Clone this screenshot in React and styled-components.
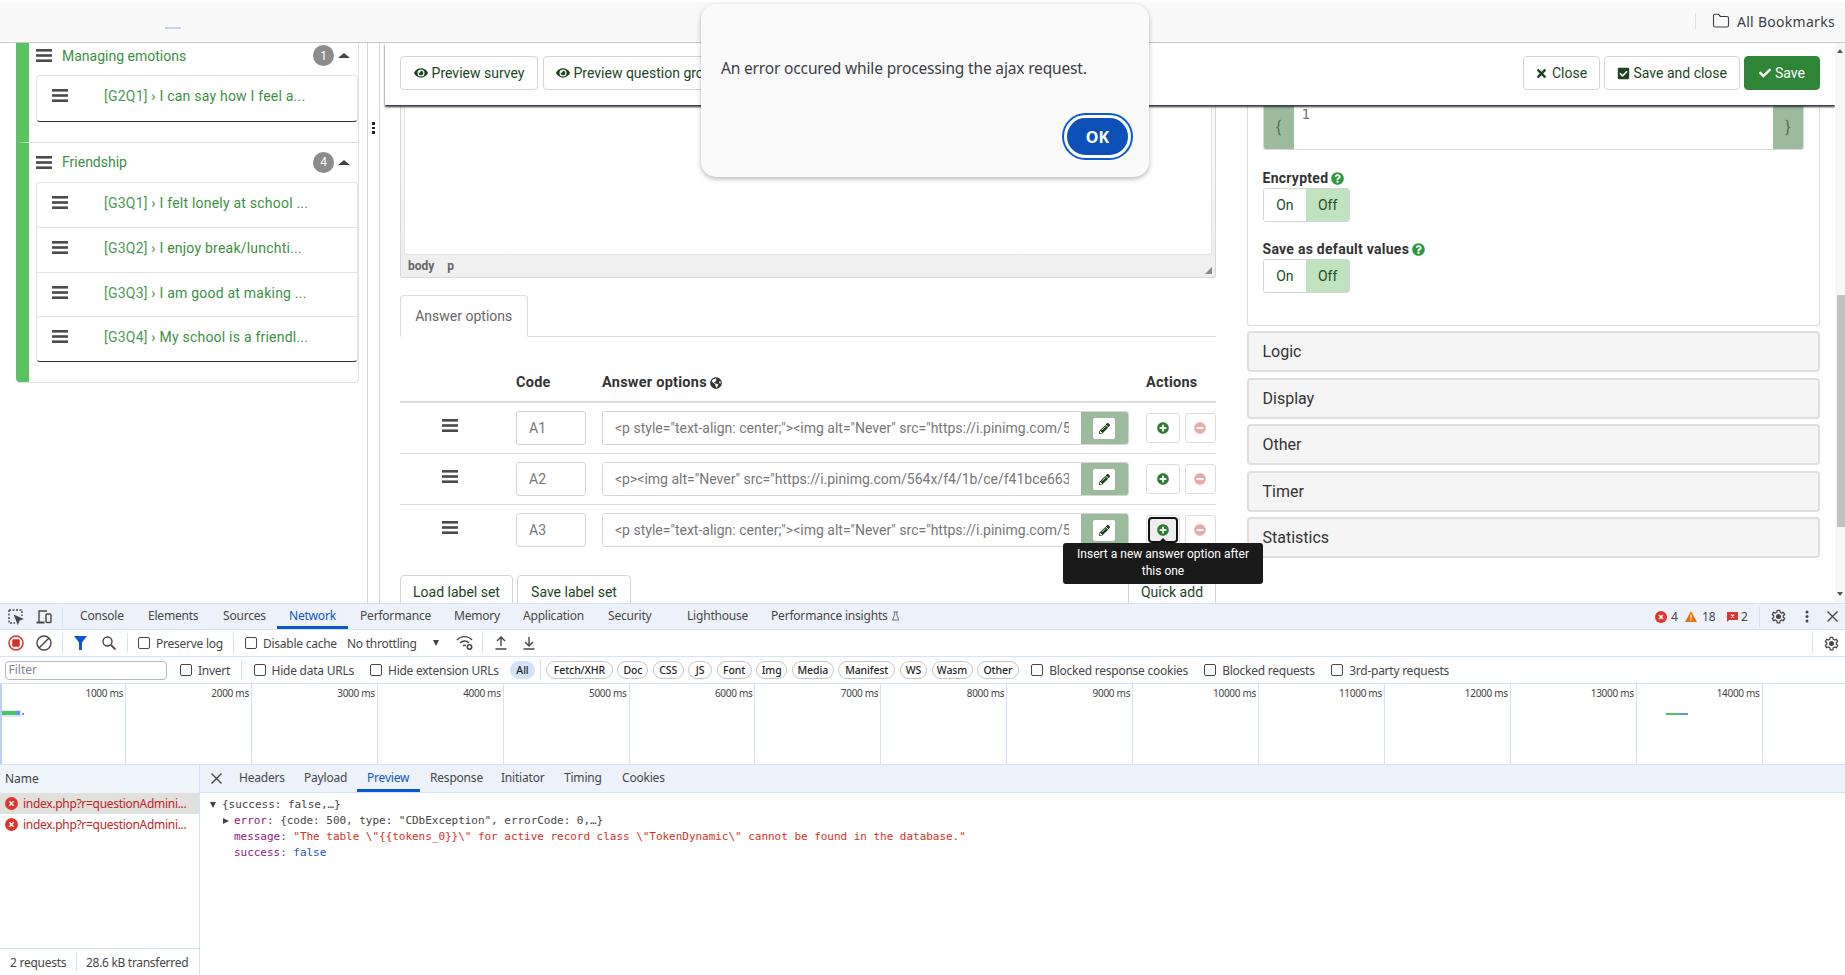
import React from 'react';
import styled, { createGlobalStyle } from 'styled-components';
import { FaEye, FaTimes, FaCheckSquare, FaCheck, FaPlusCircle, FaMinusCircle, FaPencilAlt, FaQuestionCircle, FaGlobeAmericas } from 'react-icons/fa';
import { Folder } from 'lucide-react';

const Global = createGlobalStyle`
  html, body { margin: 0; padding: 0; overflow: hidden; background: #fff; }
  * { box-sizing: border-box; }
  #root { width: 1845px; height: 975px; }
`;

const Page = styled.div`
  width: 1845px; height: 975px; display: flex; flex-direction: column; position: relative; overflow: hidden;
  font-family: Roboto, "Liberation Sans", sans-serif; font-size: 14px; color: #333;
`;

/* top bar */
const BookmarkBar = styled.div`
  height: 43px; flex: none; background: #f9f9f9; border-bottom: 1px solid #c9c9c9; border-top: 2px solid #fff;
  display: flex; align-items: center; padding: 0 9px 2px 0; position: relative;
  font-family: "Noto Sans", sans-serif; font-size: 14px; color: #3c4043;
`;
const BlueMark = styled.div`
  width: 16px; height: 2px; background: #c3d5f3; margin: 14px 0 0 165px;
`;
const BarSep = styled.div`
  width: 1px; height: 16px; background: #dedede; margin: 0 16px 0 auto;
`;
const BookmarkLabel = styled.span`
  margin-left: 7px; width: 99px; white-space: nowrap; letter-spacing: 0.28px;
`;

const Main = styled.div`
  flex: none; height: 560px; display: flex; overflow: hidden;
`;

/* sidebar */
const Sidebar = styled.div`
  width: 368px; flex: none; border-right: 1px solid #d5d5d5; padding-left: 16px; overflow: hidden;
`;
const TreePanel = styled.div`
  width: 343px; margin-top: -7px; border: 1px solid #e2e2e2; border-left: 0; border-top: 0; border-radius: 0 0 4px 4px;
`;
const Group = styled.div`
  border-left: 13px solid #5bc162; padding: 0 0 20px 7px;
  & + & { border-top: 1px solid #e0e0e0; }
  &:last-child { border-radius: 0 0 0 4px; }
`;
const GroupHead = styled.div`
  height: 39px; display: flex; align-items: center; padding-right: 8px; position: relative;
`;
const GroupName = styled.span`
  margin-left: 10px; color: #3b9143; font-size: 14px; flex: 1;
`;
const Badge = styled.span`
  width: 21px; height: 21px; border-radius: 50%; background: #8c8c8c; color: #fff; font-size: 12px;
  display: flex; align-items: center; justify-content: center;
`;
const CaretUp = styled.span`
  width: 0; height: 0; margin-left: 4px; border: 6px solid transparent; border-top: 0; border-bottom: 5px solid #444;
`;
const ItemList = styled.div`
  width: 322px; border: 1px solid #e4e4e4; border-bottom: 1px solid #333; border-radius: 4px; background: #fff;
`;
const Item = styled.div`
  height: 44.5px; padding: 12px 0 0 15px; display: flex; align-items: flex-start;
  & + & { border-top: 1px solid #e4e4e4; }
  svg { margin-top: 1px; }
`;
const ItemText = styled.span`
  margin-left: 36px; color: #3b9143; font-size: 14px; line-height: 16px; white-space: nowrap; letter-spacing: 0.22px;
`;
const Code = styled.span`
  color: #4e9a55;
`;

const BarsSvg = styled.svg`
  flex: none; display: block; width: 16px; height: 13px; fill: ${p => p.$color || '#4a4a4a'};
`;
const Bars = ({ color }) => (
  <BarsSvg viewBox="0 0 16 13" $color={color}>
    <rect y="0" width="16" height="2.6" /><rect y="5.2" width="16" height="2.6" /><rect y="10.4" width="16" height="2.6" />
  </BarsSvg>
);

const Resizer = styled.div`
  width: 12px; flex: none; border-right: 1px solid #d5d5d5; display: flex; flex-direction: column; align-items: center; padding: 79px 0 0 0; gap: 2px;
`;
const Dot = styled.span`
  width: 3px; height: 2.5px; background: #223; margin-left: 0;
`;

/* content */
const Content = styled.div`
  flex: 1; min-width: 0; display: flex; flex-direction: column; overflow: hidden;
`;
const Toolbar = styled.div`
  margin-left: 5px; height: 62px; flex: none; padding: 13px 15px 0 15px; display: flex; gap: 4.5px; background: #fff;
  box-shadow: 0 2px 2px #2e3440; position: relative; z-index: 2;
`;
const Btn = styled.div`
  height: 34px; width: ${p => p.$w}px; flex: none; display: flex; align-items: center; justify-content: center; gap: 4px;
  border: 1px solid ${p => (p.$primary ? '#2f8438' : '#d5d5d5')}; border-radius: 4px; white-space: nowrap; overflow: hidden;
  background: ${p => (p.$primary ? '#2f8438' : '#fff')}; color: ${p => (p.$primary ? '#fff' : '#1d441f')}; font-size: 14px;
  ${p => p.$push && 'margin-left: auto;'}
  ${p => p.$left && 'justify-content: flex-start; padding-left: 12px;'}
  ${p => p.$shift && `margin-left: ${p.$shift}px;`}
`;
const Columns = styled.div`
  flex: 1; min-height: 0; display: flex; padding: 0 15px 0 20px; gap: 30.5px; overflow: hidden;
`;
const LeftCol = styled.div`
  width: 816px; flex: none;
`;
const RightCol = styled.div`
  width: 573.5px; flex: none;
`;

const Editor = styled.div`
  height: 173px; border: 1px solid #d8d8d8; border-top: 0; border-radius: 0 0 3px 3px; padding: 0 3px 0 3px; position: relative;
  background: linear-gradient(#fafafa, #efefef);
`;
const EditorFrame = styled.div`
  height: 150px; background: #fff; border: 1px solid #e3e3e3; border-top: 0; margin-bottom: 0;
`;
const EditorPath = styled.div`
  height: 22px; display: flex; gap: 13px; align-items: center; padding-left: 4px; font-size: 12px; font-weight: 700; color: #666;
`;
const ResizeGrip = styled.span`
  position: absolute; right: 3px; bottom: 3px; width: 0; height: 0; border-left: 7px solid transparent; border-bottom: 7px solid #888;
`;

const TabStrip = styled.div`
  margin-top: 17px; height: 42px; border-bottom: 1px solid #dcdcdc; display: flex;
`;
const Tab = styled.div`
  width: 127.5px; height: 42px; border: 1px solid #dcdcdc; border-bottom: 1px solid #fff; border-radius: 4px 4px 0 0;
  color: #666; display: flex; align-items: center; justify-content: center; background: #fff;
`;

const TableGrid = styled.div`
  display: grid; grid-template-columns: 116px 86px 544px 70px;
`;
const HeadRow = styled(TableGrid)`
  height: 66px; border-bottom: 2px solid #dcdcdc; align-items: end; padding-bottom: 10px; font-weight: 700; font-size: 14px; color: #333; line-height: 16px; letter-spacing: 0.25px;
`;
const HeadCell = styled.div`
  display: flex; align-items: center; gap: 3px; white-space: nowrap; font-size: 14.5px;
`;
const Row = styled(TableGrid)`
  height: ${p => (p.$last ? 70 : 51)}px; padding-top: 8px;
  ${p => !p.$last && 'border-bottom: 1px solid #dcdcdc;'}
`;
const DragCell = styled.div`
  display: flex; justify-content: center; padding: 8px 16px 0 0;
`;
const CodeInput = styled.input`
  width: 70px; height: 34px; border: 1px solid #d5d5d5; border-radius: 3px; padding: 0 12px; font: 14px Roboto, sans-serif; color: #777; outline: none; background: #fff;
`;
const InputGroup = styled.div`
  width: 527px; height: 34px; display: flex; border: 1px solid #d5d5d5; border-radius: 3px; overflow: hidden;
`;
const AnswerInput = styled.input`
  flex: 1; min-width: 0; border: 0; padding: 0 12px; font: 14px Roboto, sans-serif; color: #777; outline: none; background: #fff;
`;
const EditAddon = styled.div`
  width: 47.5px; flex: none; background: #9cba9c; display: flex; align-items: center; justify-content: center;
`;
const EditBtn = styled.div`
  width: 22px; height: 21px; background: #fff; border-radius: 2px; display: flex; align-items: center; justify-content: center; color: #1c3d1c; font-size: 11px; padding-left: 1px;
`;
const ActionCell = styled.div`
  display: flex; gap: 4.5px; padding-top: 2px; height: 32px;
`;
const ActionBtn = styled.div`
  width: ${p => p.$w}px; height: 30px; border: 1px solid #ddd; border-radius: 3px; display: flex; align-items: center; justify-content: center;
  color: ${p => p.$color}; font-size: 12px; position: relative; flex: none; background: #fff;
`;
const FocusRing = styled.div`
  width: 30px; height: 26px; border: 2px solid #111; border-radius: 4px; background: #eee; display: flex; align-items: center; justify-content: center;
`;
const Tooltip = styled.div`
  position: absolute; left: -84px; top: 27px; width: 200px; height: 41px; background: #1a1a1a; color: #fff; border-radius: 3px;
  font-size: 12px; line-height: 17px; text-align: center; padding: 3px 8px; z-index: 3;
  &::before { content: ""; position: absolute; left: 95px; top: -5px; border: 5px solid transparent; border-top: 0; border-bottom: 5px solid #1a1a1a; }
`;
const BottomBtns = styled.div`
  display: flex; gap: 4px; grid-column: 1 / 4;
`;

/* right column */
const SettingsPanel = styled.div`
  height: 221px; border: 1px solid #ddd; border-top: 0; border-radius: 0 0 3px 3px; padding: 0 15px;
`;
const EqGroup = styled.div`
  height: 45px; display: flex; border: 1px solid #d8d8d8; border-top: 0; border-radius: 0 0 3px 3px; overflow: hidden; position: relative;
`;
const EqAddon = styled.div`
  width: 30px; flex: none; background: #9cba9c; color: #5d6b5d; display: flex; align-items: center; justify-content: center; font-size: 16px;
`;
const EqArea = styled.div`
  flex: 1; background: #fff; font: 14px "DejaVu Sans Mono", monospace; color: #777; padding: 0 0 0 8px; line-height: 18px; position: relative;
`;
const Label = styled.div`
  margin-top: ${p => p.$mt}px; height: 20px; display: flex; align-items: center; gap: 3px; font-weight: 700; color: #333; font-size: 14px; letter-spacing: 0.27px;
`;
const Switch = styled.div`
  width: 87.5px; height: 34px; display: flex; border: 1px solid #d5d5d5; border-radius: 3px; overflow: hidden;
`;
const SwitchPart = styled.div`
  flex: 1; display: flex; align-items: center; justify-content: center; color: #244d24;
  background: ${p => (p.$on ? '#bfe2bf' : '#fff')};
`;
const Accordion = styled.div`
  margin-top: ${p => p.$mt}px; height: 41px; border: 2px solid #dedede; border-radius: 4px; background: #f5f5f5; display: flex; align-items: center; padding-left: 14px; font-size: 16px; color: #333;
`;
const Scrollbar = styled.div`
  width: 10px; flex: none; background: #f7f7f7; display: flex; flex-direction: column; align-items: center; position: relative;
`;
const ScrollUp = styled.span`
  width: 0; height: 0; margin-top: 6px; border: 3.5px solid transparent; border-top: 0; border-bottom: 4px solid #555;
`;
const ScrollThumb = styled.div`
  width: 8px; height: 232px; margin: 242px 0 0 2px; background: #c1c1c1;
`;
const ScrollDown = styled.span`
  width: 0; height: 0; margin-top: 65px; border: 3.5px solid transparent; border-bottom: 0; border-top: 4px solid #555;
`;

/* dialog */
const Dialog = styled.div`
  position: absolute; left: 701px; top: 4px; width: 448px; height: 173px; background: #fafafa; border-radius: 15px;
  box-shadow: 0 2px 5px rgba(0,0,0,.28); display: flex; flex-direction: column; z-index: 5;
  font-family: "Noto Sans", sans-serif; color: #3a3f47;
`;
const DialogMsg = styled.div`
  margin: 52px 0 0 20px; font-size: 15.5px; line-height: 24px; white-space: nowrap; letter-spacing: -0.16px;
`;
const DialogFoot = styled.div`
  margin-top: auto; display: flex; justify-content: flex-end; padding: 0 18px 19px 0;
`;
const OkBtn = styled.div`
  width: 67px; height: 43px; border-radius: 22px; background: #0d50b8; border: 3px solid #fff; box-shadow: 0 0 0 2px #0d5bd0; color: #fff;
  font-weight: 700; font-size: 16px; display: flex; align-items: center; justify-content: center;
`;

/* devtools */
const DevTools = styled.div`
  flex: 1; min-height: 0; display: flex; flex-direction: column; font-family: "Noto Sans", sans-serif; font-size: 12px; color: #474747; background: #fff;
`;
const DTabs = styled.div`
  height: 27px; flex: none; background: #edf2fa; border-top: 1px solid #d3e3fd; border-bottom: 1px solid #d3e3fd; display: flex; align-items: stretch;
`;
const IconSlot = styled.div`
  width: ${p => p.$w}px; flex: none; display: flex; align-items: center; justify-content: ${p => p.$align || 'flex-start'}; padding-left: ${p => p.$pl || 0}px; gap: ${p => p.$gap || 0}px;
`;
const DTab = styled.div`
  width: ${p => p.$w}px; flex: none; padding: 0 0 2px 12px; white-space: nowrap; display: flex; align-items: center; gap: 4px; position: relative;
  letter-spacing: -0.2px;
  color: ${p => (p.$on ? '#0b57d0' : '#474747')};
  ${p => p.$on && 'box-shadow: inset 0 -3px 0 #0b57d0;'}
`;
const VSep = styled.div`
  width: 1px; height: ${p => p.$h || 20}px; flex: none; background: #d3e3fd; align-self: center; margin: ${p => p.$m || 0};
`;
const Counts = styled.div`
  margin-left: auto; display: flex; align-items: center; font-size: 12px;
`;
const CountText = styled.span`
  width: ${p => p.$w}px; padding-left: ${p => p.$pl}px;
`;
const DRow = styled.div`
  height: 27px; flex: none; border-bottom: 1px solid #d3e3fd; display: flex; align-items: center; white-space: nowrap;
`;
const CheckLabel = styled.label`
  width: ${p => p.$w}px; flex: none; display: flex; align-items: center; gap: 6px; letter-spacing: -0.25px;
`;
const Check = styled.span`
  width: 12px; height: 12px; flex: none; border: 1px solid #474747; border-radius: 2px; background: #fff;
`;
const PlainText = styled.span`
  width: ${p => p.$w}px; flex: none; letter-spacing: -0.25px;
`;
const FilterBox = styled.div`
  width: 162px; height: 19px; margin: 0 13.5px 0 4.5px; flex: none; border: 1px solid #b8b8b8; border-radius: 4px; color: #80868b; padding-left: 3px; line-height: 16px; font-size: 12px;
`;
const Pills = styled.div`
  display: flex; gap: 4.4px; margin-right: 12.3px;
`;
const Pill = styled.div`
  width: ${p => p.$w}px; height: 18px; border-radius: 9px; border: 1px solid ${p => (p.$on ? '#d3e3fd' : '#c7c7c7')}; background: ${p => (p.$on ? '#d3e3fd' : '#fff')};
  font-size: 10.5px; font-weight: 500; color: #1f1f1f; display: flex; align-items: center; justify-content: center; flex: none; letter-spacing: -0.1px;
`;
const Overview = styled.div`
  height: 81px; flex: none; display: flex; position: relative; border-bottom: 1px solid #d3e3fd; border-left: 2px solid #b9d0f5; margin-left: 0;
`;
const Tick = styled.div`
  width: ${p => p.$w}px; flex: none; border-right: 1px solid #d3e3fd; text-align: right; padding: 3px 2px 0 0; font-size: 10px; line-height: 13px; color: #444; letter-spacing: -0.3px;
`;
const OverviewBars = styled.svg`
  position: absolute; left: 0; top: 0; width: 1845px; height: 81px; pointer-events: none;
`;
const Details = styled.div`
  flex: 1; min-height: 0; display: flex;
`;
const NameCol = styled.div`
  width: 200px; flex: none; border-right: 1px solid #d3e3fd; display: flex; flex-direction: column;
`;
const NameHead = styled.div`
  height: 28px; flex: none; background: #f0f4fb; display: flex; align-items: center; padding: 0 0 2px 5px; color: #3c4043;
`;
const ReqRow = styled.div`
  height: 21px; flex: none; display: flex; align-items: center; padding: 0 0 1px 5px; gap: 5px; background: ${p => (p.$on ? '#e0e0dd' : '#fff')}; color: #c5221f; white-space: nowrap; overflow: hidden; letter-spacing: -0.3px;
`;
const StatusBar = styled.div`
  margin-top: auto; height: 27px; flex: none; border-top: 1px solid #d3e3fd; display: flex; align-items: center; padding-left: 10px; white-space: nowrap; letter-spacing: -0.3px;
`;
const PreviewCol = styled.div`
  flex: 1; min-width: 0; display: flex; flex-direction: column;
`;
const PTabs = styled.div`
  height: 28px; flex: none; background: #edf2fa; border-bottom: 1px solid #d3e3fd; display: flex; padding-left: 11px; align-items: stretch;
`;
const PTab = styled(DTab)`
  box-shadow: ${p => (p.$on ? 'inset 0 -3px 0 #0b57d0' : 'none')};
  padding-left: 10px;
`;
const Json = styled.div`
  padding: 4px 0 0 10px; font: 11px/16px "DejaVu Sans Mono", monospace; color: #444; white-space: pre; letter-spacing: -0.03px;
`;
const JsonLine = styled.div`
  height: 16px; padding-left: ${p => p.$indent}px; display: flex; align-items: center;
`;
const Tri = styled.span`
  width: 0; height: 0; margin-right: ${p => p.$mr}px;
  ${p => (p.$down
    ? 'border-left: 3.5px solid transparent; border-right: 3.5px solid transparent; border-top: 6px solid #444;'
    : 'border-top: 3.5px solid transparent; border-bottom: 3.5px solid transparent; border-left: 6px solid #444;')}
`;
const Key = styled.span`color: #8b1a7f;`;
const Str = styled.span`color: #d93025;`;
const Bool = styled.span`color: #1a56c4;`;

const ic = { fill: 'none', stroke: '#474747', strokeWidth: 1.4 };

const InspectIcon = () => (
  <svg width="16" height="16" viewBox="0 0 16 16" {...ic} strokeDasharray="2 1.5">
    <path d="M1 1h13v6M1 1v13h6" />
    <path d="M7 7l7 3-3 1.2-1.2 3z" fill="#474747" strokeDasharray="none" />
  </svg>
);
const DeviceIcon = () => (
  <svg width="16" height="16" viewBox="0 0 16 16" {...ic}>
    <path d="M3 13V2h8" /><path d="M0.5 13.5h8" strokeWidth="2" /><rect x="10" y="5" width="5" height="8.5" rx="1" />
  </svg>
);
const RecordIcon = () => (
  <svg width="16" height="16" viewBox="0 0 16 16">
    <circle cx="8" cy="8" r="7" fill="none" stroke="#d93025" strokeWidth="1.5" /><rect x="4.2" y="4.2" width="7.6" height="7.6" rx="1" fill="#d93025" />
  </svg>
);
const ClearIcon = () => (
  <svg width="16" height="16" viewBox="0 0 16 16" {...ic}><circle cx="8" cy="8" r="7" /><path d="M3 13L13 3" /></svg>
);
const FilterIcon = () => (
  <svg width="13" height="14" viewBox="0 0 13 14"><path d="M0 0h13L8 6.5V14H5V6.5z" fill="#0b57d0" /></svg>
);
const SearchIcon = () => (
  <svg width="14" height="14" viewBox="0 0 14 14" {...ic}><circle cx="5.5" cy="5.5" r="4.5" /><path d="M9 9l4.5 4.5" strokeWidth="1.8" /></svg>
);
const WifiIcon = () => (
  <svg width="18" height="16" viewBox="0 0 18 16" {...ic}>
    <path d="M1 5c4-4.5 11-4.5 15 0M4 8c2.5-2.6 6.500-2.600 9 0M7 11c.8-.8 2-.9 3-.4" />
    <circle cx="13.500" cy="12" r="2.200" strokeWidth="1.600" />
  </svg>
);
const UploadIcon = () => (
  <svg width="12" height="14" viewBox="0 0 12 14" {...ic}><path d="M6 10V1M2 5l4-4 4 4M.5 13h11" /></svg>
);
const DownloadIcon = () => (
  <svg width="12" height="14" viewBox="0 0 12 14" {...ic}><path d="M6 1v9M2 6l4 4 4-4M.5 13h11" /></svg>
);
const GearIcon = () => (
  <svg width="15" height="15" viewBox="0 0 24 24" fill="none" stroke="#474747" strokeWidth="2">
    <path d="M10 2h4l.6 3 2.400 1.400 2.900-1 2 3.500-2.300 2v2.200l2.300 2-2 3.500-2.900-1L14.600 19 14 22h-4l-.6-3L7 17.600l-2.900 1-2-3.500 2.300-2v-2.200l-2.300-2 2-3.500 2.900 1L9.400 5z" />
    <circle cx="12" cy="12" r="3" fill="#474747" />
  </svg>
);
const DotsIcon = () => (
  <svg width="4" height="13" viewBox="0 0 4 13" fill="#474747"><circle cx="2" cy="2" r="1.500" /><circle cx="2" cy="6.500" r="1.500" /><circle cx="2" cy="11" r="1.500" /></svg>
);
const CloseIcon = ({ size = 11 }) => (
  <svg width={size} height={size} viewBox="0 0 11 11" {...ic}><path d="M.5.5l10 10M10.500.5l-10 10" /></svg>
);
const ErrIconSvg = styled.svg`flex: none;`;
const ErrIcon = ({ size = 12 }) => (
  <ErrIconSvg width={size} height={size} viewBox="0 0 12 12">
    <circle cx="6" cy="6" r="6" fill="#dc362e" /><path d="M4 4l4 4M8 4l-4 4" stroke="#fff" strokeWidth="1.300" />
  </ErrIconSvg>
);
const WarnIcon = () => (
  <svg width="12" height="11" viewBox="0 0 12 11">
    <path d="M6 0l6 11H0z" fill="#e8710a" /><rect x="5.400" y="3.500" width="1.200" height="4" fill="#fff" /><rect x="5.400" y="8.300" width="1.200" height="1.300" fill="#fff" />
  </svg>
);
const MsgIcon = () => (
  <svg width="11" height="11" viewBox="0 0 11 11">
    <path d="M0 1h11v8H2l-2 2z" fill="#dc362e" /><path d="M4 3.500l3 3M7 3.500l-3 3" stroke="#fff" strokeWidth="1.200" />
  </svg>
);
const FlaskIcon = () => (
  <svg width="10" height="12" viewBox="0 0 10 12" {...ic} strokeWidth="1"><path d="M2 .5h6M3.500.5v4L.8 11.500h8.400L6.500 4.500v-4" /></svg>
);

const tabs = [['Console', 68], ['Elements', 75], ['Sources', 66], ['Network', 71, true], ['Performance', 94], ['Memory', 69], ['Application', 85], ['Security', 79], ['Lighthouse', 84]];
const pills = [['Fetch/XHR', 67], ['Doc', 31], ['CSS', 31], ['JS', 24], ['Font', 35], ['Img', 31.5], ['Media', 42], ['Manifest', 57], ['WS', 27.5], ['Wasm', 41], ['Other', 42]];
const ptabs = [['Headers', 65], ['Payload', 63], ['Preview', 63, true], ['Response', 71], ['Initiator', 63], ['Timing', 58], ['Cookies', 60]];
const secs = Array.from({ length: 14 }, (_, i) => i + 1);

const rows = [
  ['A1', '<p style="text-align: center;"><img alt="Never" src="https://i.pinimg.com/564x/f4/1b/ce/f41bce663a7.jpg"></p>'],
  ['A2', '<p><img alt="Never" src="https://i.pinimg.com/564x/f4/1b/ce/f41bce663a7f1b2c.jpg" /></p>'],
  ['A3', '<p style="text-align: center;"><img alt="Never" src="https://i.pinimg.com/564x/f4/1b/ce/f41bce663a7.jpg"></p>'],
];

const Question = ({ code, text }) => (
  <Item><Bars /><ItemText><Code>[{code}]</Code> › {text}</ItemText></Item>
);

export default function App() {
  return (
    <Page>
      <Global />
      <BookmarkBar>
        <BlueMark />
        <BarSep />
        <Folder size={18} strokeWidth={1.5} color="#3c4043" />
        <BookmarkLabel>All Bookmarks</BookmarkLabel>
      </BookmarkBar>

      <Main>
        <Sidebar>
          <TreePanel>
            <Group>
              <GroupHead><Bars /><GroupName>Managing emotions</GroupName><Badge>1</Badge><CaretUp /></GroupHead>
              <ItemList>
                <Question code="G2Q1" text="I can say how I feel a..." />
              </ItemList>
            </Group>
            <Group>
              <GroupHead><Bars /><GroupName>Friendship</GroupName><Badge>4</Badge><CaretUp /></GroupHead>
              <ItemList>
                <Question code="G3Q1" text="I felt lonely at school ..." />
                <Question code="G3Q2" text="I enjoy break/lunchti..." />
                <Question code="G3Q3" text="I am good at making ..." />
                <Question code="G3Q4" text="My school is a friendl..." />
              </ItemList>
            </Group>
          </TreePanel>
        </Sidebar>
        <Resizer><Dot /><Dot /><Dot /></Resizer>

        <Content>
          <Toolbar>
            <Btn $w={138}><FaEye size={14} /> Preview survey</Btn>
            <Btn $w={200} $left><FaEye size={14} /> Preview question group</Btn>
            <Btn $w={77} $push><FaTimes size={13} /> Close</Btn>
            <Btn $w={135.5}><FaCheckSquare size={13} /> Save and close</Btn>
            <Btn $w={76} $primary><FaCheck size={12} /> Save</Btn>
          </Toolbar>
          <Columns>
            <LeftCol>
              <Editor>
                <EditorFrame />
                <EditorPath><span>body</span><span>p</span></EditorPath>
                <ResizeGrip />
              </Editor>
              <TabStrip><Tab>Answer options</Tab></TabStrip>
              <HeadRow>
                <div />
                <HeadCell>Code</HeadCell>
                <HeadCell>Answer options <FaGlobeAmericas size={12} color="#333" /></HeadCell>
                <HeadCell>Actions</HeadCell>
              </HeadRow>
              {rows.map(([code, html], i) => (
                <Row key={code} $last={i === 2}>
                  <DragCell><Bars /></DragCell>
                  <CodeInput readOnly value={code} />
                  <InputGroup>
                    <AnswerInput readOnly value={html} />
                    <EditAddon><EditBtn><FaPencilAlt /></EditBtn></EditAddon>
                  </InputGroup>
                  <ActionCell>
                    <ActionBtn $w={34} $color="#2a7d33">
                      {i === 2 ? (
                        <>
                          <FocusRing><FaPlusCircle /></FocusRing>
                          <Tooltip>Insert a new answer option after this one</Tooltip>
                        </>
                      ) : <FaPlusCircle />}
                    </ActionBtn>
                    <ActionBtn $w={31.500} $color="#e9aaaa"><FaMinusCircle /></ActionBtn>
                  </ActionCell>
                </Row>
              ))}
              <TableGrid>
                <BottomBtns>
                  <Btn $w={113}>Load label set</Btn>
                  <Btn $w={114}>Save label set</Btn>
                </BottomBtns>
                <Btn $w={88} $shift={-18}>Quick add</Btn>
              </TableGrid>
            </LeftCol>

            <RightCol>
              <SettingsPanel>
                <EqGroup>
                  <EqAddon>{'{'}</EqAddon>
                  <EqArea>1</EqArea>
                  <EqAddon>{'}'}</EqAddon>
                </EqGroup>
                <Label $mt={18}>Encrypted <FaQuestionCircle size={13} color="#2e9a3e" /></Label>
                <Switch><SwitchPart>On</SwitchPart><SwitchPart $on>Off</SwitchPart></Switch>
                <Label $mt={17}>Save as default values <FaQuestionCircle size={13} color="#2e9a3e" /></Label>
                <Switch><SwitchPart>On</SwitchPart><SwitchPart $on>Off</SwitchPart></Switch>
              </SettingsPanel>
              <Accordion $mt={5}>Logic</Accordion>
              <Accordion $mt={5.500}>Display</Accordion>
              <Accordion $mt={5.500}>Other</Accordion>
              <Accordion $mt={5.500}>Timer</Accordion>
              <Accordion $mt={5.500}>Statistics</Accordion>
            </RightCol>
          </Columns>
        </Content>
        <Scrollbar><ScrollUp /><ScrollThumb /><ScrollDown /></Scrollbar>
      </Main>

      <DevTools>
        <DTabs>
          <IconSlot $w={62} $pl={8} $gap={12}><InspectIcon /><DeviceIcon /></IconSlot>
          <VSep />
          <IconSlot $w={5} />
          {tabs.map(([t, w, on]) => <DTab key={t} $w={w} $on={on}>{t}</DTab>)}
          <DTab $w={140}>Performance insights <FlaskIcon /></DTab>
          <Counts>
            <ErrIcon />
            <CountText $w={18} $pl={4}>4</CountText>
            <IconSlot $w={17}><WarnIcon /></IconSlot>
            <CountText $w={25} $pl={0}>18</CountText>
            <MsgIcon />
            <CountText $w={21} $pl={3}>2</CountText>
            <VSep $m="0 11px 0 0" />
            <GearIcon />
            <IconSlot $w={41} $pl={19}><DotsIcon /></IconSlot>
            <IconSlot $w={18}><CloseIcon size={11} /></IconSlot>
          </Counts>
        </DTabs>

        <DRow>
          <IconSlot $w={35.500} $pl={8}><RecordIcon /></IconSlot>
          <IconSlot $w={26.500}><ClearIcon /></IconSlot>
          <VSep />
          <IconSlot $w={39} $pl={11}><FilterIcon /></IconSlot>
          <IconSlot $w={25}><SearchIcon /></IconSlot>
          <VSep $m="0 10px 0 0" />
          <CheckLabel $w={95}><Check />Preserve log</CheckLabel>
          <VSep $m="0 11px 0 0" />
          <CheckLabel $w={102}><Check />Disable cache</CheckLabel>
          <PlainText $w={86}>No throttling</PlainText>
          <IconSlot $w={22}><Tri $down $mr={0} /></IconSlot>
          <IconSlot $w={27} $pl={1}><WifiIcon /></IconSlot>
          <VSep $m="0 12px 0 0" />
          <IconSlot $w={27.500}><UploadIcon /></IconSlot>
          <IconSlot $w={12}><DownloadIcon /></IconSlot>
          <VSep $m="0 11px 0 auto" />
          <IconSlot $w={21}><GearIcon /></IconSlot>
        </DRow>

        <DRow>
          <FilterBox>Filter</FilterBox>
          <CheckLabel $w={61}><Check />Invert</CheckLabel>
          <VSep $m="0 11.600px 0 0" />
          <CheckLabel $w={116.400}><Check />Hide data URLs</CheckLabel>
          <CheckLabel $w={140}><Check />Hide extension URLs</CheckLabel>
          <Pill $w={25} $on>All</Pill>
          <VSep $m="0 5px" />
          <Pills>{pills.map(([t, w]) => <Pill key={t} $w={w}>{t}</Pill>)}</Pills>
          <CheckLabel $w={173}><Check />Blocked response cookies</CheckLabel>
          <CheckLabel $w={127}><Check />Blocked requests</CheckLabel>
          <CheckLabel $w={125}><Check />3rd-party requests</CheckLabel>
        </DRow>

        <Overview>
          {secs.map((s, i) => <Tick key={s} $w={i === 0 ? 124 : 125.900}>{s}000 ms</Tick>)}
          <OverviewBars viewBox="0 0 1845 81">
            <rect x="0" y="26" width="19" height="7" fill="#dbe7fb" />
            <rect x="0" y="27" width="14" height="4" fill="#4bc465" />
            <rect x="14" y="27" width="4" height="4" fill="#5a95ee" />
            <rect x="20" y="29" width="2" height="2" fill="#5a95ee" />
            <rect x="1664" y="29" width="12" height="2" fill="#4bc465" />
            <rect x="1676" y="29" width="10" height="2" fill="#5a95ee" />
          </OverviewBars>
        </Overview>

        <Details>
          <NameCol>
            <NameHead>Name</NameHead>
            <ReqRow $on><ErrIcon size={13} />index.php?r=questionAdmini...</ReqRow>
            <ReqRow><ErrIcon size={13} />index.php?r=questionAdmini...</ReqRow>
            <StatusBar>
              <PlainText $w={66}>2 requests</PlainText>
              <VSep $h={18} $m="0 9px 0 0" />
              <span>28.6 kB transferred</span>
            </StatusBar>
          </NameCol>
          <PreviewCol>
            <PTabs>
              <IconSlot $w={18}><CloseIcon size={11} /></IconSlot>
              {ptabs.map(([t, w, on]) => <PTab key={t} $w={w} $on={on}>{t}</PTab>)}
            </PTabs>
            <Json>
              <JsonLine $indent={0}><Tri $down $mr={6} />{'{success: false,…}'}</JsonLine>
              <JsonLine $indent={13}><Tri $mr={5} /><Key>error</Key>{': {code: 500, type: "CDbException", errorCode: 0,…}'}</JsonLine>
              <JsonLine $indent={24}><Key>message</Key>{': '}<Str>{'"The table \\"{{tokens_0}}\\" for active record class \\"TokenDynamic\\" cannot be found in the database."'}</Str></JsonLine>
              <JsonLine $indent={24}><Key>success</Key>{': '}<Bool>false</Bool></JsonLine>
            </Json>
          </PreviewCol>
        </Details>
      </DevTools>

      <Dialog>
        <DialogMsg>An error occured while processing the ajax request.</DialogMsg>
        <DialogFoot><OkBtn>OK</OkBtn></DialogFoot>
      </Dialog>
    </Page>
  );
}
